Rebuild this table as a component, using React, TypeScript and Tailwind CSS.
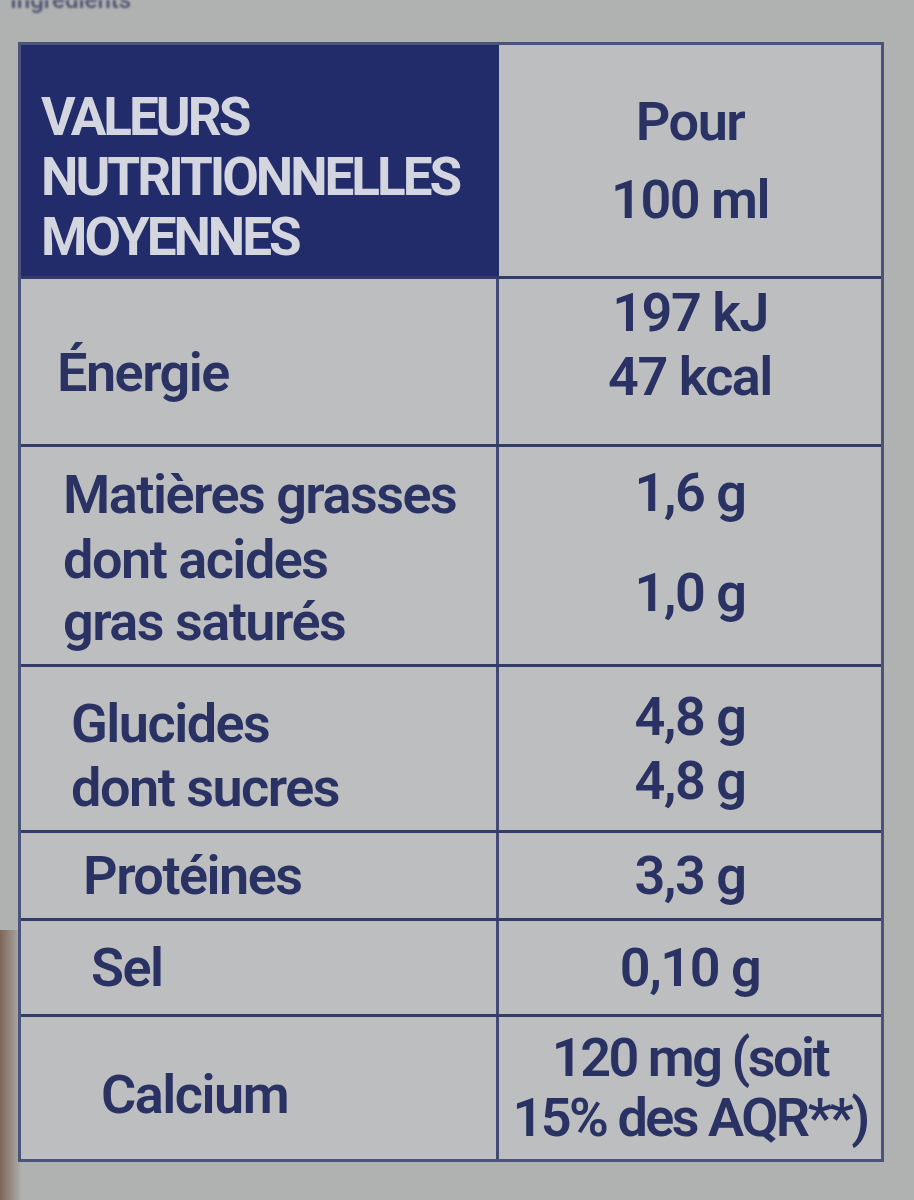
import React from "react"

const ink = "text-[#2a3163]"
const line = "border-[#333b69]"

function Row({
  h,
  pl,
  left,
  right,
  last,
}: {
  h: string
  pl: string
  left: React.ReactNode
  right: React.ReactNode
  last?: boolean
}) {
  return (
    <div className={`grid grid-cols-[478px_1fr] ${h} ${last ? "" : `border-b-[3px] ${line}`}`}>
      <div className={`border-r-[3px] border-[#414a74] ${pl} flex flex-col justify-center`}>{left}</div>
      <div className="flex flex-col justify-center items-center">{right}</div>
    </div>
  )
}

export default function App() {
  return (
    <div
      className={`w-[914px] h-[1200px] overflow-hidden bg-[#b0b2b1] relative ${ink}`}
      style={{ fontFamily: "Roboto, 'Noto Sans', sans-serif" }}
    >
      {/* finger at the bottom left */}
      <div className="absolute left-0 top-[930px] w-[22px] h-[270px] bg-gradient-to-r from-[#7c6656] to-[#b0b2b1]" />
      {/* cut-off ingredients line above the table */}
      <div className="h-[16px] overflow-hidden pl-[10px] blur-[1px]">
        <div className="-mt-[14px] text-[24px] leading-[28px] font-medium text-[#4a5070]">Ingrédients</div>
      </div>
      <div className="pt-[26px] pl-[18px] blur-[0.7px]">
        <div className="w-[866px] border-[3px] border-[#4a5379] bg-[#bcbebf] text-[54px] leading-[64px] font-semibold tracking-[-1.5px]">
          {/* header */}
          <div className={`grid grid-cols-[478px_1fr] h-[234px] border-b-[3px] ${line}`}>
            <div className="bg-[#222c6a] text-[#d3d6df] font-bold uppercase text-[53px] leading-[60px] tracking-[-3px] pl-[20px] pt-[42px]">
              Valeurs
              <br />
              Nutritionnelles
              <br />
              Moyennes
            </div>
            <div className="flex flex-col items-center pt-[38px] leading-[78px]">
              <span>Pour</span>
              <span>100 ml</span>
            </div>
          </div>

          <Row
            h="h-[168px]"
            pl="pl-[36px] pt-[22px]"
            left={<span>Énergie</span>}
            right={
              <>
                <span className="-mt-[34px]">197 kJ</span>
                <span>47 kcal</span>
              </>
            }
          />

          <div className={`grid grid-cols-[478px_1fr] h-[220px] border-b-[3px] ${line}`}>
            <div className="border-r-[3px] border-[#414a74] pl-[42px] pt-[16px]">
              <div>Matières grasses</div>
              <div className="leading-[66px]">dont acides</div>
              <div className="leading-[58px]">gras saturés</div>
            </div>
            <div className="flex flex-col items-center pt-[14px]">
              <span>1,6 g</span>
              <span className="mt-[36px]">1,0 g</span>
            </div>
          </div>

          <Row
            h="h-[166px]"
            pl="pl-[50px] pt-[14px]"
            left={
              <>
                <span>Glucides</span>
                <span>dont sucres</span>
              </>
            }
            right={
              <>
                <span>4,8 g</span>
                <span>4,8 g</span>
              </>
            }
          />
          <Row h="h-[88px]" pl="pl-[62px]" left={<span>Protéines</span>} right={<span>3,3 g</span>} />
          <Row h="h-[96px]" pl="pl-[70px]" left={<span>Sel</span>} right={<span>0,10 g</span>} />
          <Row
            h="h-[142px]"
            pl="pl-[80px] pt-[14px]"
            last
            left={<span>Calcium</span>}
            right={
              <div className="text-center leading-[60px] tracking-[-2.5px]">
                <div>120 mg (soit</div>
                <div>15% des AQR**)</div>
              </div>
            }
          />
        </div>
      </div>
    </div>
  )
}
